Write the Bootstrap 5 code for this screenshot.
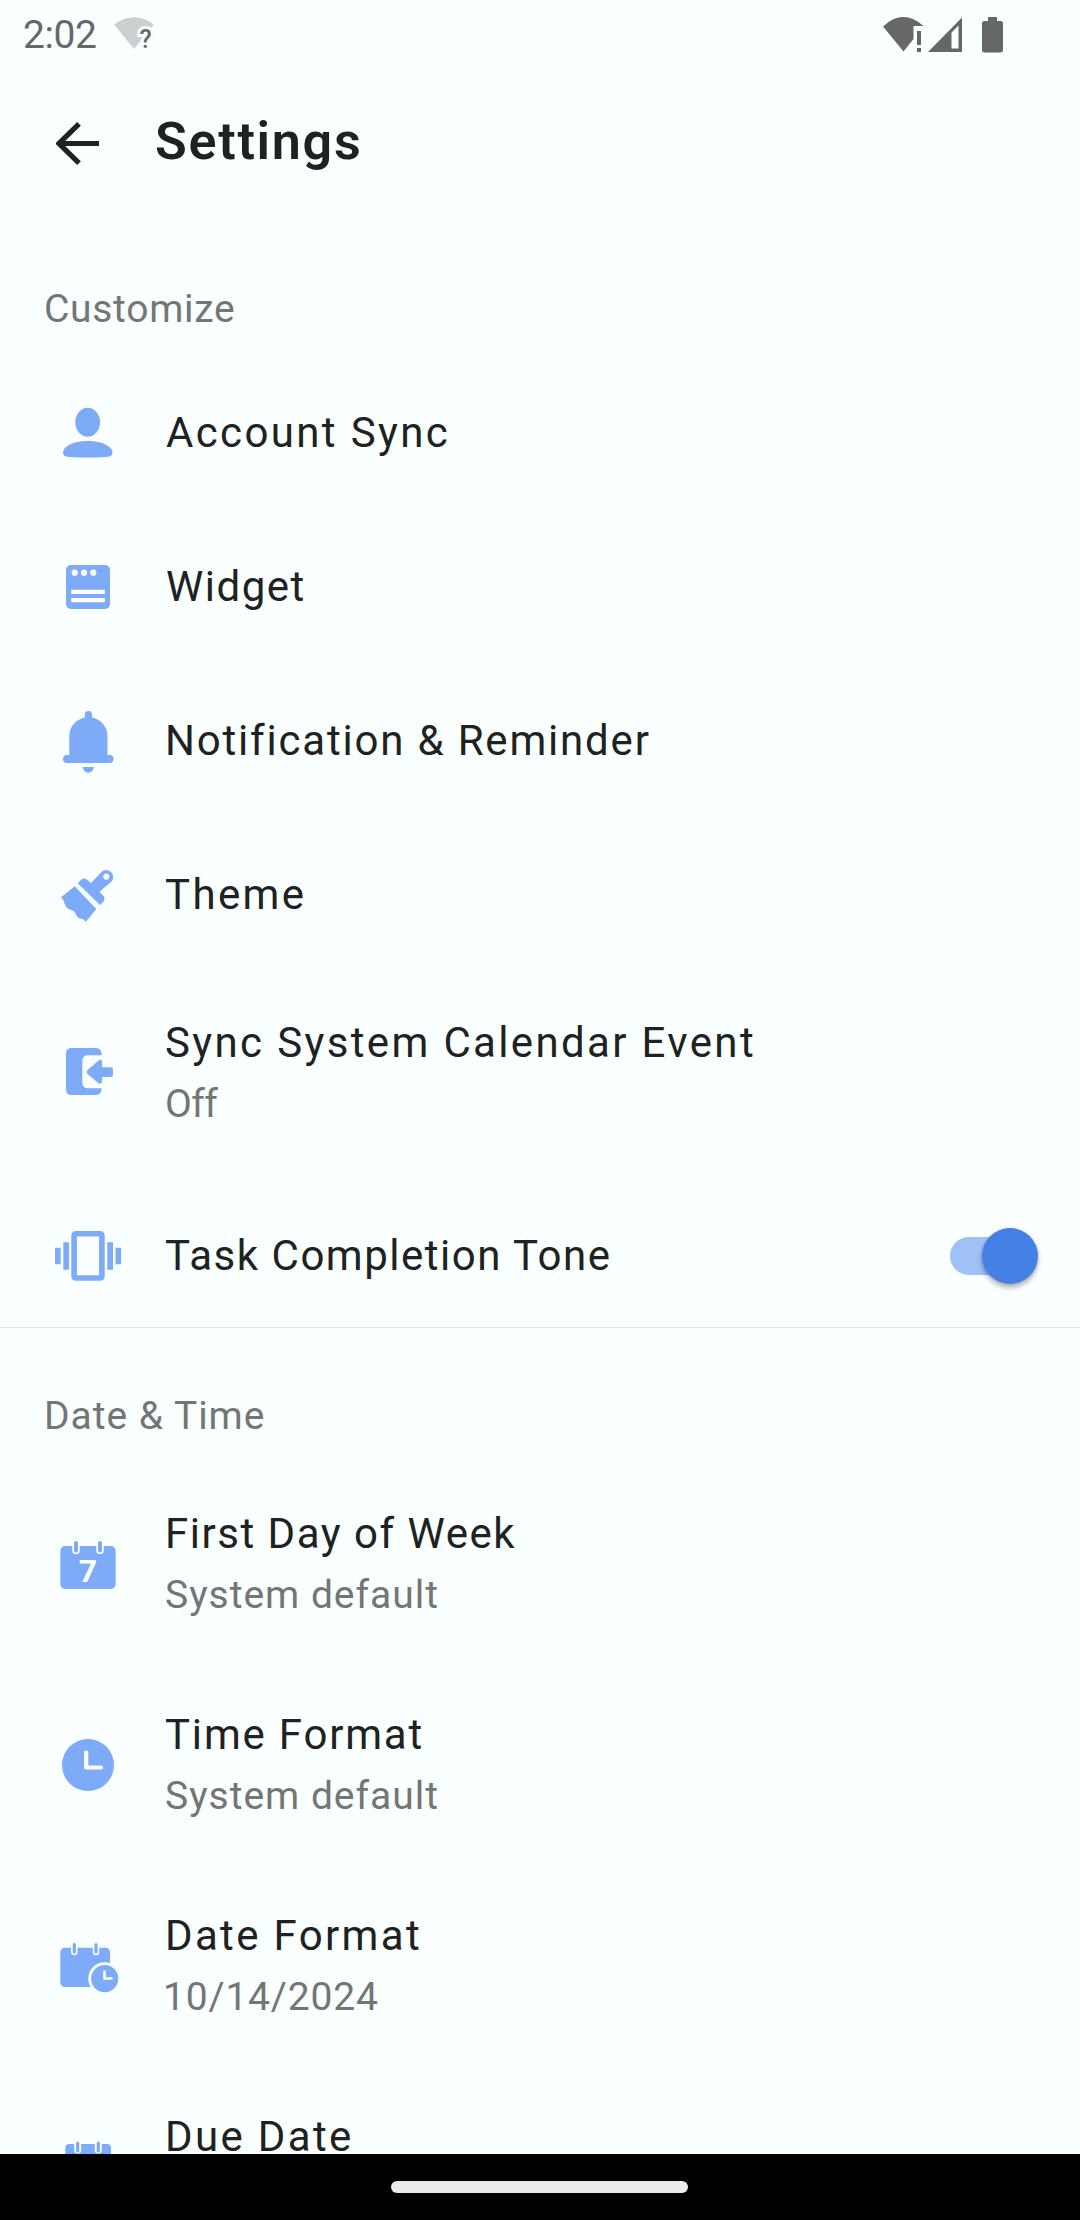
<!DOCTYPE html>
<html lang="en">
<head>
<meta charset="utf-8">
<meta name="viewport" content="width=device-width, initial-scale=1">
<title>Settings</title>
<link href="https://cdn.jsdelivr.net/npm/bootstrap@5.3.0/dist/css/bootstrap.min.css" rel="stylesheet">
<style>
:root{--page:#faffff;--ink:#202222;--muted:#737676;--tint:#7eabf7;--status:#666868}
body{font-family:Roboto,"Liberation Sans",sans-serif;background:var(--page);color:var(--ink)}
.screen{width:1080px;height:2220px}
.status-bar{height:66px;padding:3px 76px 0 23px;color:var(--status)}
.clock-text{font-size:39px;line-height:60px;letter-spacing:-.011em}
.wifi-left{margin-left:17px}
.app-bar{height:155px;padding-left:56px}
.app-title{font-size:52px;font-weight:600;line-height:60px;letter-spacing:.0333em;margin:-4px 0 0 55px}
.settings-list{flex:1 1 0;min-height:0}
.section-head{height:135px;padding:42px 0 0 44px;font-size:39px;color:var(--muted)}
.setting{height:154px;padding:0 42px 0 48px;gap:37px}
.setting.tall{height:201px}
.setting.toned{height:155px;padding-top:12px;border-bottom:1px solid #dde3e3}
.setting>svg{flex:none;fill:var(--tint)}
.label{font-size:42px;line-height:60px;white-space:nowrap}
.value{font-size:39px;line-height:62px;color:var(--muted);white-space:nowrap}
.tall .texts{padding-top:3px}
.last .texts{padding-bottom:62px}
.ls-0{letter-spacing:-.015em}.ls-1{letter-spacing:.018em}.ls-2{letter-spacing:.025em}
.ls-3{letter-spacing:.036em}.ls-4{letter-spacing:.043em}.ls-5{letter-spacing:.056em}
.nudge{margin-left:1px}
.date-value{letter-spacing:.021em;margin-left:-2px}
.toggle{width:88px;height:56px}
.toggle-track{width:80px;height:38px;background:#9fc1f5}
.toggle-thumb{width:56px;height:56px;background:#4581e5;right:0;top:0;box-shadow:0 4px 5px rgba(0,0,0,.28),0 0 3px rgba(0,0,0,.12)}
.cut{fill:none;stroke:var(--page);stroke-linecap:round;stroke-linejoin:round}
.tab{fill:none;stroke:var(--tint);stroke-linecap:round;stroke-width:4}
.tab.thin{stroke-width:3.2}
.seven{font:700 32px Roboto,sans-serif;fill:#fff;text-anchor:middle}
.nav-strip{height:66px;background:#000;padding-right:1px}
.pill{width:297px;height:12px;background:#ebebeb}
</style>
</head>
<body>
<div class="screen d-flex flex-column overflow-hidden">
  <div class="status-bar d-flex align-items-center flex-shrink-0">
    <span class="clock-text">2:02</span>
    <svg class="wifi-left" width="44" height="36" viewBox="0 0 44 36">
      <path d="M0 7.500Q20-7 40 7.500L20 32Z" fill="#cbd0d0"/>
      <text x="31.500" y="31" font-size="25" font-weight="500" text-anchor="middle" fill="#666868" stroke="#faffff" stroke-width="6" paint-order="stroke">?</text>
    </svg>
    <svg class="ms-auto" width="124" height="40" viewBox="880 13 124 40" fill="#666868">
      <path d="M883 24.500Q903 6 923.500 24H913.500V37L903.500 49.500Z"/>
      <path d="M917 29h4v14h-4zM917 46h4v4h-4z"/>
      <path fill-rule="evenodd" d="M928 50L962 15.500V50ZM951.500 30.500V46.500H958.500V23.500Z"/>
      <path d="M988 15h9v4h3.500q2.500 0 2.500 2.500V48q0 2.500-2.500 2.500H984.500Q982 50.500 982 48V21.500Q982 19 984.500 19H988Z"/>
    </svg>
  </div>

  <header class="app-bar d-flex align-items-center flex-shrink-0">
    <svg width="44" height="44" viewBox="0 0 44 44" fill="none" stroke="#202222" stroke-width="5.200"><path d="M43 21.500H4M23 1.800L3 21.500L23 41.200"/></svg>
    <h1 class="app-title">Settings</h1>
  </header>

  <main class="settings-list overflow-hidden">
    <div class="section-head d-flex align-items-center ls-1">Customize</div>

    <div class="setting d-flex align-items-center">
      <svg width="80" height="80" viewBox="0 0 80 80"><ellipse cx="39.700" cy="29.300" rx="12.400" ry="14.500"/><path d="M15 60C15 53 26 48 39.700 48S64.500 53 64.500 60Q64.500 63 60 63.700Q40 65.500 19.500 63.700Q15 63 15 60Z"/></svg>
      <div class="label ls-5 nudge">Account Sync</div>
    </div>

    <div class="setting d-flex align-items-center">
      <svg width="80" height="80" viewBox="0 0 80 80"><rect x="18" y="18" width="44" height="44" rx="5"/><g fill="#fff"><circle cx="26.700" cy="25.700" r="3.100"/><circle cx="36" cy="25.700" r="3.100"/><circle cx="45.300" cy="25.700" r="3.100"/><path d="M23.300 42.700h33.500v4.300H23.300zM23.300 51h33.500v4.300H23.300z"/></g></svg>
      <div class="label ls-3 nudge">Widget</div>
    </div>

    <div class="setting d-flex align-items-center">
      <svg width="80" height="80" viewBox="0 0 80 80"><path d="M36.800 16.500V13.500a3.600 3.600 0 0 1 7.200 0v3C53.500 18.500 59.500 26 59.500 35V54h2a4 4 0 0 1 0 8H19a4 4 0 0 1 0-8h2.300V35C21.300 26 27.500 18.500 36.800 16.500ZM34.700 66H46Q45 71.700 40.300 71.700T34.700 66Z"/></svg>
      <div class="label ls-4">Notification &amp; Reminder</div>
    </div>

    <div class="setting d-flex align-items-center">
      <svg width="80" height="80" viewBox="0 0 80 80"><path fill-rule="evenodd" d="M13 42.300L26.700 31.300L48.300 54L38 66.700Q36 64 33.500 63.700Q30 63.500 28 59.700Q26.500 55.500 23 55Q18 53.500 16.800 49Q16 45 13 42.300ZM29.700 28.300L33.500 24.500Q36 22.500 39 24.500L43 28L54 16.500A7 7 0 0 1 64 26L51.500 36.800L55.500 41Q57.500 43.500 55.500 46.500L52 50ZM58.300 18.500a3.100 3.100 0 1 0 .01 0Z"/></svg>
      <div class="label ls-5">Theme</div>
    </div>

    <div class="setting tall d-flex align-items-center">
      <svg width="80" height="81" viewBox="0 0 80 81"><path d="M23.500 16H48Q53.700 16 53.700 23.300H40Q34.300 23.300 34.300 29V50.500Q34.300 56.300 40 56.300H53.700Q53.700 63 48 63H23.500Q18 63 18 57.500V21.500Q18 16 23.500 16Z"/><path d="M39.500 38L50.500 28.500Q54 26.700 54 30V35.300H62.500Q65 35.300 65 37.800V42.500Q65 45 62.500 45H54V49.500Q53.500 53 50.500 51.200L39.500 42Q37.700 40 39.500 38Z"/></svg>
      <div class="texts"><div class="label ls-5">Sync System Calendar Event</div><div class="value ls-0">Off</div></div>
    </div>

    <div class="setting toned d-flex align-items-center">
      <svg width="80" height="80" viewBox="0 0 80 80"><rect x="26.100" y="17.800" width="27.800" height="44.200" rx="1.500" fill="none" stroke="#7eabf7" stroke-width="5.600"/><path d="M7 31.700h5.700v16.600H7zM15.300 26.300H21v27.400h-5.700zM59.300 26.300H65v27.400h-5.700zM67.500 31.700h5.600v16.600h-5.600z"/></svg>
      <div class="label ls-3">Task Completion Tone</div>
      <div class="toggle position-relative ms-auto d-flex align-items-center" role="switch" aria-checked="true">
        <div class="toggle-track rounded-pill"></div>
        <div class="toggle-thumb rounded-circle position-absolute"></div>
      </div>
    </div>

    <div class="section-head d-flex align-items-center ls-2">Date &amp; Time</div>

    <div class="setting tall d-flex align-items-center">
      <svg width="80" height="81" viewBox="0 0 80 81"><rect x="12.300" y="23" width="55.400" height="43" rx="5"/><path class="cut" stroke-width="7.500" d="M28 20V27.500M52 20V27.500"/><path class="tab" d="M28 20V27.500M52 20V27.500"/><text class="seven" x="40" y="58.700">7</text></svg>
      <div class="texts"><div class="label ls-3">First Day of Week</div><div class="value ls-2">System default</div></div>
    </div>

    <div class="setting tall d-flex align-items-center">
      <svg width="80" height="81" viewBox="0 0 80 81"><circle cx="40" cy="41" r="26"/><path class="cut" stroke-width="4.200" d="M38.200 28.500V43.500H53"/></svg>
      <div class="texts"><div class="label ls-4">Time Format</div><div class="value ls-2">System default</div></div>
    </div>

    <div class="setting tall d-flex align-items-center">
      <svg width="80" height="81" viewBox="0 0 80 81"><rect x="12.300" y="22.700" width="49.700" height="39.300" rx="4.500"/><path class="cut" stroke-width="6.500" d="M26.300 19.500V27M48 19.500V27"/><path class="tab thin" d="M26.300 19.500V27M48 19.500V27"/><circle cx="56.700" cy="53.700" r="15" stroke="#faffff" stroke-width="2.800"/><path class="cut" stroke-width="2.700" d="M56.500 46.500V53.500H63.500"/></svg>
      <div class="texts"><div class="label ls-5">Date Format</div><div class="value date-value">10/14/2024</div></div>
    </div>

    <div class="setting tall last d-flex align-items-center">
      <svg width="80" height="81" viewBox="0 0 80 81"><rect x="17.300" y="18" width="45.700" height="44" rx="4"/><path class="cut" stroke-width="7" d="M29.700 17V24M50.300 17V24"/><path class="tab thin" d="M29.700 17V25M50.300 17V25"/></svg>
      <div class="texts"><div class="label ls-5">Due Date</div></div>
    </div>
  </main>

  <footer class="nav-strip d-flex align-items-center justify-content-center flex-shrink-0"><div class="pill rounded-pill"></div></footer>
</div>
<script src="https://cdn.jsdelivr.net/npm/bootstrap@5.3.0/dist/js/bootstrap.bundle.min.js"></script>
</body>
</html>
